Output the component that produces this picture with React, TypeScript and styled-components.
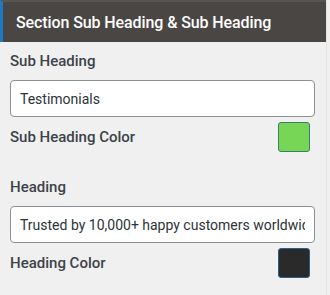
import React from 'react';
import styled, { createGlobalStyle } from 'styled-components';

const GlobalStyle = createGlobalStyle`
  body {
    margin: 0;
    background: #f0f0f0;
    font-family: Roboto, "Liberation Sans", Arial, sans-serif;
  }
`;

const Panel = styled.div`
  width: 327px;
  height: 295px;
  box-sizing: border-box;
  background: #f0f0f0;
  border-right: 1px solid #e2e2e2;
`;

const Header = styled.div`
  display: flex;
  align-items: center;
  height: 42px;
  box-sizing: border-box;
  padding-left: 13px;
  background: #4a4644;
  border-top: 2px solid #58544f;
  border-left: 3px solid #1f7ac4;
  color: #ffffff;
  font-size: 16px;
  font-weight: 500;
  letter-spacing: -0.1px;
`;

const Body = styled.div`
  padding: 0 11px 0 10px;
`;

const Group = styled.div<{ $top: number }>`
  display: flex;
  flex-direction: column;
  padding-top: ${p => p.$top}px;
`;

const Label = styled.label`
  display: block;
  line-height: 18px;
  font-size: 15px;
  font-weight: 500;
  color: #3c434a;
`;

const TextInput = styled.input`
  box-sizing: border-box;
  width: 100%;
  height: 37px;
  margin-top: 10px;
  padding: 0 9px;
  border: 1px solid #8c8f94;
  border-radius: 4px;
  background: #ffffff;
  font-family: inherit;
  font-size: 14px;
  color: #2c3338;
  outline: none;
`;

const ColorRow = styled.div`
  display: flex;
  justify-content: space-between;
  align-items: center;
  margin-top: 5px;
  padding-right: 5px;
`;

const Swatch = styled.div<{ $fill: string; $edge: string }>`
  width: 32px;
  height: 30px;
  box-sizing: border-box;
  border-radius: 3px;
  background: ${p => p.$fill};
  border: 1px solid ${p => p.$edge};
`;

const App: React.FC = () => {
  return (
    <Panel>
      <GlobalStyle />
      <Header>Section Sub Heading &amp; Sub Heading</Header>
      <Body>
        <Group $top={10}>
          <Label>Sub Heading</Label>
          <TextInput defaultValue="Testimonials" />
          <ColorRow>
            <Label>Sub Heading Color</Label>
            <Swatch $fill="#77d656" $edge="#3a7d6a" />
          </ColorRow>
        </Group>
        <Group $top={26}>
          <Label>Heading</Label>
          <TextInput defaultValue="Trusted by 10,000+ happy customers worldwide" />
          <ColorRow>
            <Label>Heading Color</Label>
            <Swatch $fill="#2a2a2a" $edge="#2d5f8a" />
          </ColorRow>
        </Group>
      </Body>
    </Panel>
  );
};

export default App;
